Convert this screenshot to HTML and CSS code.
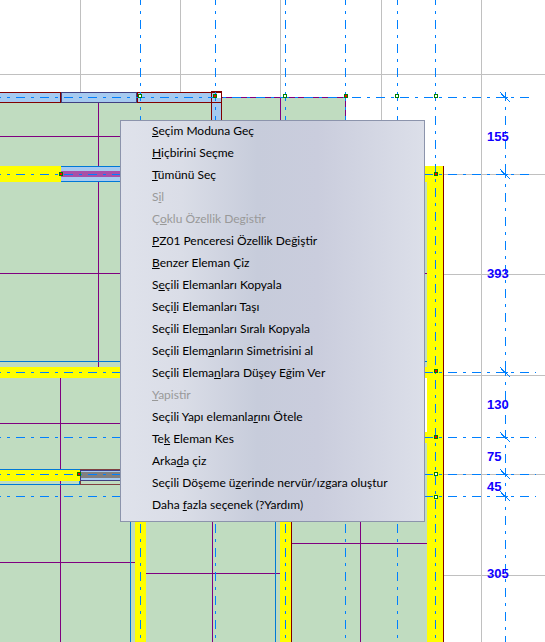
FILE: index.html
```html
<!DOCTYPE html>
<html lang="tr">
<head>
<meta charset="utf-8">
<title>Kat planı</title>
<link rel="stylesheet" href="styles.css">
</head>
<body>
<main class="workspace">
  <svg class="plan" viewBox="0 0 545 642" role="img" aria-label="Kat planı">
    <defs>
      <g id="handle"><rect class="handle-box" x="-1.500" y="-1.500" width="3" height="3"/></g>
      <g id="tick"><path d="M-5 -5L5 5M-4 -3L1 2M-3 0L3 0"/></g>
    </defs>

    <!-- background grid -->
    <path class="grid" d="M80.500 0V97M180.500 0V97M280.500 0V97M381.500 0V642M481.500 0V642M0 74.500H545M440 174.500H545M440 274.500H545M440 375.500H545M440 474.500H545M440 575.500H545"/>

    <!-- slabs -->
    <path class="slab" d="M0 103H221V97H346V166H427V367H0ZM0 378H425V443H427V642H0Z"/>
    <path class="joint" d="M98.500 103V367M60.500 378V642M0 136.500H121M0 273.500H427M0 423.500H121M0 562.500H135M146 573.500H280M292 543.500H427M212.500 520V642M360.500 520V642M280.500 98V121M221 97.500H346M345.500 97V121"/>
    <path class="edge" d="M0 361.500H427M130.500 520V642M275.500 520V642M0 484.500H79.500V480M0 469.500H80"/>

    <!-- top wall and column -->
    <rect class="glass" x="0" y="92" width="221" height="11"/>
    <rect class="glass" x="211" y="97" width="10" height="24"/>
    <rect class="paper" x="217" y="93" width="4" height="5"/>
    <path class="outline" d="M0 92.500H60.500V102.500H0M211 92.500H137.500V102.500H221M211.500 121V91.500H221.500V121M211 92.500H221"/>
    <path class="frame" d="M136.500 92.500H61.500V102.500H136.500Z"/>

    <!-- beams -->
    <path class="beam" d="M0 166H61V182H0ZM0 367H121V378H0ZM0 470H80V481H0ZM135 520H146V642H135ZM280 520H291V642H280ZM424 166H443V642H427V443H424V432H427V378H424V367H427V182H424Z"/>
    <path class="outline" d="M443.500 166V642M291.500 520V642"/>

    <!-- selected window -->
    <rect class="glass" x="61" y="166" width="60" height="16"/>
    <path class="edge" d="M61 166.500H121M61 181.500H121"/>
    <rect class="selected" x="61" y="171" width="60" height="6"/>

    <!-- lower window -->
    <rect class="glass" x="80" y="470" width="41" height="11"/>
    <rect class="sill" x="80" y="472" width="41" height="6"/>
    <path class="frame" d="M121 470.500H80.500V480.500H121"/>
    <path class="reveal" d="M80 469.500H121M80.500 481V484.500H121"/>

    <!-- axes -->
    <path class="axis" d="M-8 97.500H529M-8 174.500H529M-8 372.500H536M-8 437.500H536M-8 474.500H536M-8 496.500H536"/>
    <path class="axis" d="M140.500 -4V642M215.500 -4V642M285.500 -4V642M345.500 -4V642M397.500 -4V642M435.500 -4V642"/>
    <path class="axis" d="M505.500 92V174M505.500 169V372M505.500 367V437M505.500 430V474M505.500 468V642"/>
    <g class="ticks">
      <use href="#tick" x="505" y="97"/><use href="#tick" x="505" y="174"/><use href="#tick" x="505" y="372"/>
      <use href="#tick" x="505" y="437"/><use href="#tick" x="505" y="474"/><use href="#tick" x="505" y="496"/>
    </g>

    <!-- grips -->
    <g class="grip-on">
      <use href="#handle" x="61" y="174"/><use href="#handle" x="215" y="96"/><use href="#handle" x="346" y="96"/>
      <use href="#handle" x="436" y="174"/><use href="#handle" x="436" y="371"/><use href="#handle" x="436" y="437"/>
      <use href="#handle" x="79" y="474"/>
    </g>
    <g class="grip-off">
      <use href="#handle" x="140" y="96"/><use href="#handle" x="285" y="96"/><use href="#handle" x="397" y="96"/>
      <use href="#handle" x="436" y="96"/><use href="#handle" x="436" y="474"/><use href="#handle" x="436" y="497"/>
    </g>

    <g class="dims">
      <text x="487" y="141">155</text><text x="487" y="278">393</text><text x="487" y="409">130</text>
      <text x="487" y="461">75</text><text x="487" y="491">45</text><text x="487" y="578">305</text>
    </g>
  </svg>

  <div class="menu" role="menu">
    <button role="menuitem"><u>S</u>eçim Moduna Geç</button>
    <button role="menuitem"><u>H</u>içbirini Seçme</button>
    <button role="menuitem"><u>T</u>ümünü Seç</button>
    <button role="menuitem" disabled>S<u>i</u>l</button>
    <button role="menuitem" disabled>Ç<u>o</u>klu Özellik Degistir</button>
    <button role="menuitem"><u>P</u>Z01 Penceresi Özellik Değiştir</button>
    <button role="menuitem"><u>B</u>enzer Eleman Çiz</button>
    <button role="menuitem">S<u>e</u>çili Elemanları Kopyala</button>
    <button role="menuitem">Seçi<u>l</u>i Elemanları Taşı</button>
    <button role="menuitem">Seçili Ele<u>m</u>anları Sıralı Kopyala</button>
    <button role="menuitem">Seçili Elem<u>a</u>nların Simetrisini al</button>
    <button role="menuitem">Seçili Elema<u>n</u>lara Düşey Eğim Ver</button>
    <button role="menuitem" disabled><u>Y</u>apistir</button>
    <button role="menuitem">Seçili Yapı elemanla<u>r</u>ını Ötele</button>
    <button role="menuitem">Te<u>k</u> Eleman Kes</button>
    <button role="menuitem">Arka<u>d</u>a çiz</button>
    <button role="menuitem">Seçili Döşeme ü<u>z</u>erinde nervür/ızgara oluştur</button>
    <button role="menuitem">Daha <u>f</u>azla seçenek (?Yardım)</button>
  </div>
</main>
</body>
</html>
```
FILE: styles.css
```css
body {
  margin: 0;
  background: #fff;
}

.workspace {
  position: relative;
  overflow: hidden;
}

.plan {
  display: block;
  width: 100%;
  height: auto;
  shape-rendering: crispEdges;
}

.plan path,
.plan rect { fill: none; }

.plan .grid { stroke: #c0c0c0; }
.plan .slab { fill: #c0dcc0; }
.plan .joint { stroke: #800080; }
.plan .edge { stroke: #0078d7; }
.plan .glass { fill: #a6caf0; }
.plan .paper { fill: #fff; }
.plan .outline { stroke: #800000; }
.plan .frame { stroke: #404080; }
.plan .reveal { stroke: #804040; }
.plan .beam { fill: #ff0; }
.plan .selected { fill: #a850a8; }
.plan .sill { fill: #808080; }

.plan .axis {
  stroke: #0080ff;
  stroke-dasharray: 9 6 3 6;
}

.ticks { stroke: #0080ff; }

.plan .handle-box { fill: inherit; }
.grip-on { fill: #f00; stroke: #008000; }
.grip-off { fill: #fff; stroke: #008000; }

.dims {
  fill: #1000ff;
  font: bold 13px "Liberation Sans", Arial, sans-serif;
}

.menu {
  position: absolute;
  top: 120px;
  left: 120px;
  box-sizing: border-box;
  width: 305px;
  padding: 0 1px 4px;
  display: flex;
  flex-direction: column;
  border: 1px solid #8c94ac;
  background: linear-gradient(to right, #dfe2eb 0%, #dadde7 20%, #c7ccdb 45%, #cacddd 65%, #dcdfe9 100%);
}

.menu button {
  height: 22px;
  padding: 0 0 2px 30px;
  border: 0;
  background: none;
  color: #000;
  font: 12px/20px Lato, "Open Sans", sans-serif;
  text-align: left;
  white-space: nowrap;
}

.menu button:disabled { color: #999; }

.menu u { text-underline-offset: 1px; }
```
